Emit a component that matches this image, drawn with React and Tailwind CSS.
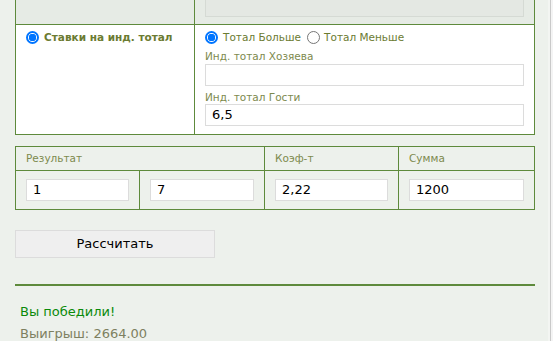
import React from "react";

function Radio({ checked }) {
  return (
    <span
      className={
        "inline-block w-[13px] h-[13px] rounded-full shrink-0 box-border " +
        (checked
          ? "border-[2px] border-[#0075ff] bg-white bg-[radial-gradient(circle,#0075ff_0,#0075ff_3.5px,#fff_4px)]"
          : "border border-[#767676] bg-white")
      }
    />
  );
}

function Input({ value, className = "" }) {
  return (
    <div
      className={
        "h-[22px] bg-white border border-[#dcdcdc] px-[6px] flex items-center text-[13px] text-black " +
        className
      }
    >
      {value}
    </div>
  );
}

export default function App() {
  return (
    <div className="w-[553px] h-[341px] overflow-hidden bg-[#edf1ec] flex font-['DejaVu_Sans',sans-serif]">
      <div className="w-[548px] pl-[15px] pr-[13px]">
        {/* Table 1 */}
        <div className="mt-[-21px] border border-[#5e8a3c] w-[520px]">
          <div className="flex h-[45px] bg-[#e6ebe5] border-b border-[#5e8a3c]">
            <div className="w-[179px] border-r border-[#5e8a3c]" />
            <div className="flex-1 px-[10px] pt-[8px]">
              <div className="h-[29px] bg-[#e4e8e3] border border-[#d5dad4]" />
            </div>
          </div>
          <div className="flex bg-white h-[109px]">
            <div className="w-[179px] border-r border-[#5e8a3c] pl-[10px] pt-[6px]">
              <div className="flex items-center gap-[5px]">
                <Radio checked />
                <span className="text-[10.5px] font-bold text-[#6b7b31] leading-[13px]">
                  Ставки на инд. тотал
                </span>
              </div>
            </div>
            <div className="flex-1 px-[10px] pt-[6px]">
              <div className="flex items-center text-[10.5px] text-[#6b7b31] leading-[13px]">
                <Radio checked />
                <span className="ml-[5px]">Тотал Больше</span>
                <span className="ml-[6px]" />
                <Radio />
                <span className="ml-[4px]">Тотал Меньше</span>
              </div>
              <div className="mt-[5px] text-[10.5px] text-[#7d8a4e] leading-[14px]">
                Инд. тотал Хозяева
              </div>
              <Input value="" className="mt-[1px]" />
              <div className="mt-[4px] text-[10.5px] text-[#7d8a4e] leading-[14px]">
                Инд. тотал Гости
              </div>
              <Input value="6,5" className="mt-[0px]" />
            </div>
          </div>
        </div>

        {/* Table 2 */}
        <div className="mt-[11px] border border-[#5e8a3c] w-[520px]">
          <div className="grid grid-cols-[124px_125px_134px_1fr] h-[24px] border-b border-[#5e8a3c] text-[10.5px] text-[#7d8a4e]">
            <div className="col-span-2 border-r border-[#5e8a3c] pl-[10px] flex items-center">
              Результат
            </div>
            <div className="border-r border-[#5e8a3c] pl-[10px] flex items-center">
              Коэф-т
            </div>
            <div className="pl-[10px] flex items-center">Сумма</div>
          </div>
          <div className="grid grid-cols-[124px_125px_134px_1fr] h-[38px]">
            <div className="border-r border-[#5e8a3c] px-[10px] pt-[8px]">
              <Input value="1" />
            </div>
            <div className="border-r border-[#5e8a3c] px-[10px] pt-[8px]">
              <Input value="7" />
            </div>
            <div className="border-r border-[#5e8a3c] px-[10px] pt-[8px]">
              <Input value="2,22" />
            </div>
            <div className="px-[10px] pt-[8px]">
              <Input value="1200" />
            </div>
          </div>
        </div>

        {/* Button */}
        <div className="mt-[20px] w-[200px] h-[28px] bg-[#efefef] border border-[#dcdcdc] flex items-center justify-center text-[13px] text-black">
          Рассчитать
        </div>

        {/* Divider */}
        <div className="mt-[26px] h-[2px] bg-[#5e8a3c] w-[520px]" />

        <div className="pl-[5px] mt-[15px] text-[13px] leading-[22px]">
          <div className="text-[#0a8a0a]">Вы победили!</div>
          <div className="text-[#7d8060]">Выигрыш: 2664.00</div>
        </div>
      </div>
      <div className="w-[2px] bg-[#f3f5f2]" />
      <div className="w-[1px] bg-[#c9c9c9]" />
      <div className="w-[2px] bg-[#f4f4f4]" />
    </div>
  );
}
